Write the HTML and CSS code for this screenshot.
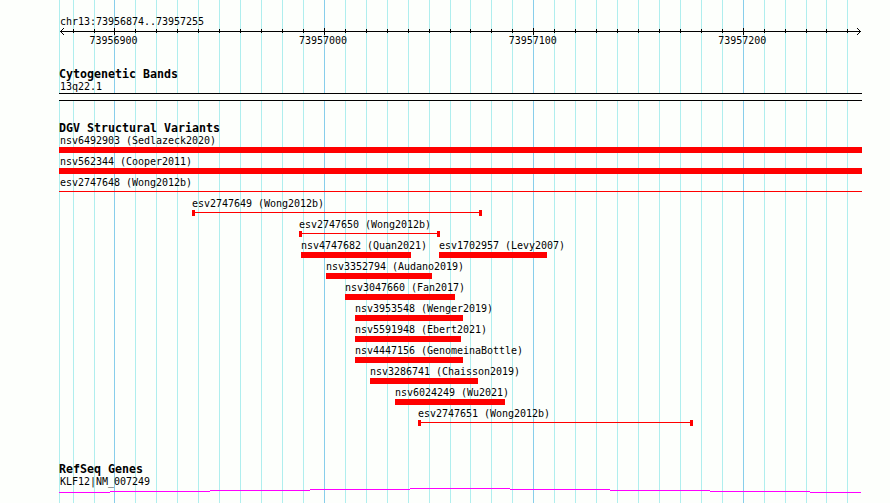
FILE: index.html
```html
<!DOCTYPE html>
<html lang="en">
<head>
<meta charset="utf-8">
<title>chr13:73956874..73957255</title>
<link rel="stylesheet" href="styles.css">
</head>
<body>

<div class="browser">

  <!-- vertical guide lines, one every 10 bp -->
  <svg class="guides" width="890" height="503" shape-rendering="crispEdges">
    <path class="minor" d="M59.5 0V503M73.5 0V503M94.5 0V503M135.5 0V503M156.5 0V503M177.5 0V503M198.5 0V503M219.5 0V503M240.5 0V503M261.5 0V503M282.5 0V503M303.5 0V503M345.5 0V503M366.5 0V503M387.5 0V503M408.5 0V503M429.5 0V503M450.5 0V503M470.5 0V503M491.5 0V503M512.5 0V503M554.5 0V503M575.5 0V503M596.5 0V503M617.5 0V503M638.5 0V503M659.5 0V503M680.5 0V503M701.5 0V503M722.5 0V503M764.5 0V503M785.5 0V503M806.5 0V503M826.5 0V503M847.5 0V503"/>
    <path class="major" d="M114.5 0V503M324.5 0V503M533.5 0V503M743.5 0V503"/>
  </svg>

  <div class="ruler">
    <div class="label">chr13:73956874..73957255</div>
    <svg class="axis" width="803" height="8" viewBox="59 28 803 8" shape-rendering="crispEdges">
      <path d="M60 31.5H861"/>
      <path d="M73.5 29V33M94.5 29V33M135.5 29V33M156.5 29V33M177.5 29V33M198.5 29V33M219.5 29V33M240.5 29V33M261.5 29V33M282.5 29V33M303.5 29V33M345.5 29V33M366.5 29V33M387.5 29V33M408.5 29V33M429.5 29V33M450.5 29V33M470.5 29V33M491.5 29V33M512.5 29V33M554.5 29V33M575.5 29V33M596.5 29V33M617.5 29V33M638.5 29V33M659.5 29V33M680.5 29V33M701.5 29V33M722.5 29V33M764.5 29V33M785.5 29V33M806.5 29V33M826.5 29V33M847.5 29V33"/>
      <path d="M114.5 28V35M324.5 28V35M533.5 28V35M743.5 28V35"/>
      <path d="M61 30.5h1M62 29.5h1M63 28.5h1M61 32.5h1M62 33.5h1M63 34.5h1"/>
      <path d="M859 30.5h1M858 29.5h1M857 28.5h1M859 32.5h1M858 33.5h1M857 34.5h1"/>
    </svg>
    <div class="numbers">
      <span>73956900</span>
      <span>73957000</span>
      <span>73957100</span>
      <span>73957200</span>
    </div>
  </div>

  <div class="track cyto">
    <h2>Cytogenetic Bands</h2>
    <div class="label">13q22.1</div>
    <div class="band"></div>
  </div>

  <div class="track variants">
    <h2>DGV Structural Variants</h2>
    <div class="row">
      <div class="feature full" style="width: 803px"><span class="label">nsv6492903 (Sedlazeck2020)</span><div class="bar"></div></div>
    </div>
    <div class="row">
      <div class="feature full" style="width: 803px"><span class="label">nsv562344 (Cooper2011)</span><div class="bar"></div></div>
    </div>
    <div class="row">
      <div class="feature full" style="width: 803px"><span class="label">esv2747648 (Wong2012b)</span><div class="span"></div></div>
    </div>
    <div class="row">
      <div class="feature" style="margin-left: 133px; width: 290px"><span class="label">esv2747649 (Wong2012b)</span><div class="span capped"></div></div>
    </div>
    <div class="row">
      <div class="feature" style="margin-left: 240px; width: 141px"><span class="label">esv2747650 (Wong2012b)</span><div class="span capped"></div></div>
    </div>
    <div class="row">
      <div class="feature" style="margin-left: 242px; width: 110px"><span class="label">nsv4747682 (Quan2021)</span><div class="bar"></div></div>
      <div class="feature" style="margin-left: 28px; width: 108px"><span class="label">esv1702957 (Levy2007)</span><div class="bar"></div></div>
    </div>
    <div class="row">
      <div class="feature" style="margin-left: 267px; width: 106px"><span class="label">nsv3352794 (Audano2019)</span><div class="bar"></div></div>
    </div>
    <div class="row">
      <div class="feature" style="margin-left: 286px; width: 110px"><span class="label">nsv3047660 (Fan2017)</span><div class="bar"></div></div>
    </div>
    <div class="row">
      <div class="feature" style="margin-left: 296px; width: 108px"><span class="label">nsv3953548 (Wenger2019)</span><div class="bar"></div></div>
    </div>
    <div class="row">
      <div class="feature" style="margin-left: 296px; width: 106px"><span class="label">nsv5591948 (Ebert2021)</span><div class="bar"></div></div>
    </div>
    <div class="row">
      <div class="feature" style="margin-left: 296px; width: 108px"><span class="label">nsv4447156 (GenomeinaBottle)</span><div class="bar"></div></div>
    </div>
    <div class="row">
      <div class="feature" style="margin-left: 311px; width: 108px"><span class="label">nsv3286741 (Chaisson2019)</span><div class="bar"></div></div>
    </div>
    <div class="row">
      <div class="feature" style="margin-left: 336px; width: 110px"><span class="label">nsv6024249 (Wu2021)</span><div class="bar"></div></div>
    </div>
    <div class="row">
      <div class="feature" style="margin-left: 359px; width: 275px"><span class="label">esv2747651 (Wong2012b)</span><div class="span capped"></div></div>
    </div>
  </div>

  <div class="track genes">
    <h2>RefSeq Genes</h2>
    <div class="label">KLF12|NM_007249</div>
    <svg class="intron" width="803" height="6" viewBox="59 488 803 6" shape-rendering="crispEdges">
      <path d="M59 492.5H110M110 491.5H210M210 490.5H310M310 489.5H410M410 488.5H510M510 489.5H610M610 490.5H710M710 491.5H810M810 492.5H861"/>
    </svg>
  </div>

</div>

</body>
</html>
```
FILE: styles.css
```css
body {
  margin: 0;
  background: #fdfffc;
  overflow: hidden;
}

* {
  box-sizing: border-box;
}

.browser {
  position: relative;
  width: 890px;
  height: 503px;
  padding: 15px 28px 0 59px;
  font-family: "DejaVu Sans Mono", "Liberation Mono", monospace;
  font-size: 10px;
  line-height: 13px;
  letter-spacing: -0.02px;
  color: #000;
}

svg {
  display: block;
  fill: none;
}

/* guide lines lie behind every track */
.guides {
  position: absolute;
  top: 0;
  left: 0;
}

.minor {
  stroke: #afeeee;
}

.major {
  stroke: #87ceeb;
}

.ruler,
.track {
  position: relative;
}

.label {
  display: block;
  height: 13px;
  padding-left: 1px;
  white-space: nowrap;
}

/* Ruler */
.ruler {
  height: 53px;
}

.axis {
  stroke: #000;
}

.numbers {
  display: flex;
  gap: 161.6px;
  margin-top: -2px;
  padding-left: 30.5px;
}

.numbers span {
  width: 48px;
}

/* Tracks */
.track h2 {
  margin: 0;
  height: 12px;
  font-size: 11.63px;
  line-height: 12px;
  letter-spacing: 0;
}

.cyto {
  height: 54px;
}

.band {
  height: 8px;
  border: solid #000;
  border-width: 1px 0;
  background: #fdfffc;
}

.variants {
  height: 341px;
}

.row {
  display: flex;
  height: 21px;
}

.feature {
  flex: none;
}

.feature .label {
  padding-left: 0;
}

.feature.full .label {
  padding-left: 1px;
}

.bar {
  height: 6px;
  background: #f00;
}

/* thin line, with square ends when the whole variant is in view */
.span {
  height: 6px;
  background: linear-gradient(#f00, #f00) 0 2px / 100% 1px no-repeat;
}

.span.capped {
  border: solid #f00;
  border-width: 0 3px;
}

/* Genes */
.intron {
  stroke: #f0f;
}
```
